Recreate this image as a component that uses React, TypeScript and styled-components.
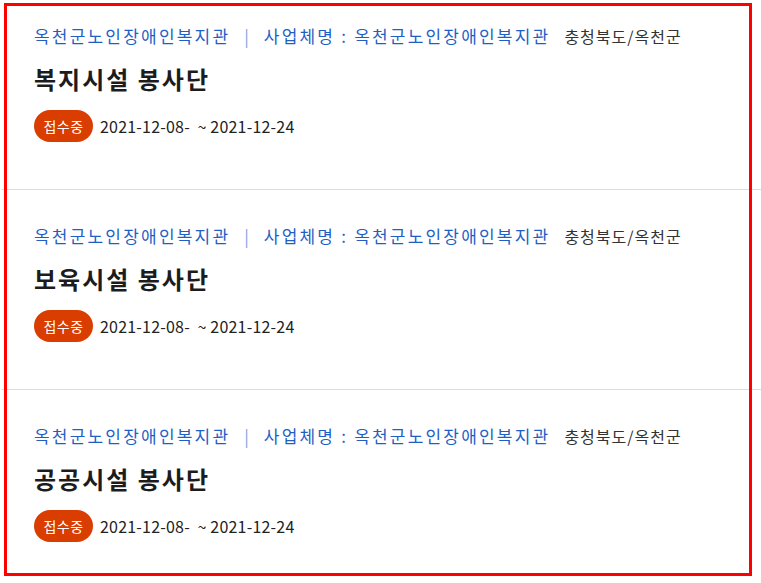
import React from 'react';
import styled, { createGlobalStyle } from 'styled-components';

const GlobalStyle = createGlobalStyle`
  html, body {
    margin: 0;
    padding: 0;
    background: #fff;
  }
  body {
    font-family: 'Noto Sans CJK KR', 'Noto Sans', sans-serif;
    color: #222;
  }
`;

const Frame = styled.div`
  position: relative;
  width: 761px;
  height: 583px;
  overflow: hidden;

  &::after {
    content: '';
    position: absolute;
    left: 4px;
    top: 3px;
    width: 742px;
    height: 567px;
    border: 3px solid #ff0000;
    pointer-events: none;
  }
`;

const List = styled.ul`
  list-style: none;
  margin: 0 0 0 2px;
  padding: 0;
`;

const Item = styled.li`
  box-sizing: border-box;
  height: 200px;
  padding: 34px 32px 0;
  border-bottom: 1px solid #dddddd;

  &:first-child {
    height: 190px;
    padding-top: 24px;
  }
`;

const Meta = styled.div`
  display: flex;
  align-items: baseline;
  height: 24px;
  line-height: 24px;
  white-space: nowrap;
`;

const Org = styled.span`
  font-size: 17px;
  letter-spacing: 2.2px;
  color: #1f5fc4;
`;

const Bar = styled.span`
  font-size: 17px;
  color: #7fa3dc;
  margin: 0 15px 0 14px;
`;

const Region = styled.span`
  font-size: 16px;
  letter-spacing: 1px;
  color: #333;
  margin-left: 14px;
`;

const Title = styled.h3`
  margin: 15px 0 0;
  font-size: 24px;
  line-height: 32px;
  font-weight: 700;
  color: #1c1c1c;
  letter-spacing: 2px;
`;

const Period = styled.div`
  display: flex;
  align-items: center;
  gap: 7px;
  margin-top: 15px;
`;

const Badge = styled.span`
  display: inline-flex;
  align-items: center;
  justify-content: center;
  width: 59px;
  height: 32px;
  border-radius: 16px;
  background: #d93d00;
  color: #fff;
  font-size: 14px;
  letter-spacing: 0.5px;
`;

const Dates = styled.span`
  font-size: 16px;
  letter-spacing: 0.2px;
  color: #222;
  white-space: pre;
`;

type Program = {
  title: string;
};

const programs: Program[] = [
  { title: '복지시설 봉사단' },
  { title: '보육시설 봉사단' },
  { title: '공공시설 봉사단' },
];

export default function App() {
  return (
    <Frame>
      <GlobalStyle />
      <List>
        {programs.map((p) => (
          <Item key={p.title}>
            <Meta>
              <Org>옥천군노인장애인복지관</Org>
              <Bar>|</Bar>
              <Org>사업체명 : 옥천군노인장애인복지관</Org>
              <Region>충청북도/옥천군</Region>
            </Meta>
            <Title>{p.title}</Title>
            <Period>
              <Badge>접수중</Badge>
              <Dates>2021-12-08-  ~ 2021-12-24</Dates>
            </Period>
          </Item>
        ))}
      </List>
    </Frame>
  );
}
